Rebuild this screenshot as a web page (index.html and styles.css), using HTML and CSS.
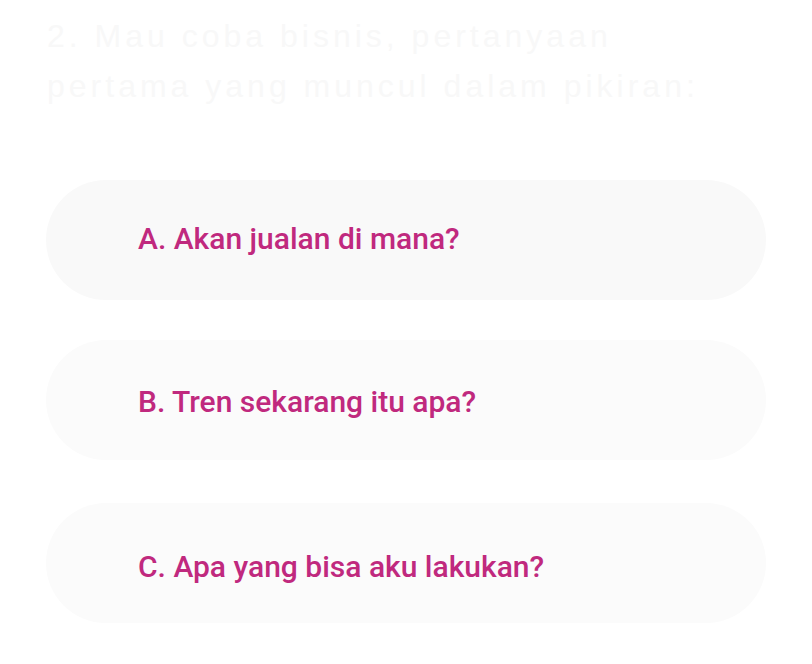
FILE: index.html
```html
<!DOCTYPE html>
<html lang="id">
<head>
<meta charset="utf-8">
<link rel="stylesheet" href="styles.css">
</head>
<body>
<main class="quiz">
  <h1 class="question">2. Mau coba bisnis, pertanyaan pertama yang muncul dalam pikiran:</h1>
  <ul class="options">
    <li class="option option-a">A. Akan jualan di mana?</li>
    <li class="option option-b">B. Tren sekarang itu apa?</li>
    <li class="option option-c">C. Apa yang bisa aku lakukan?</li>
  </ul>
</main>
</body>
</html>
```

FILE: styles.css
```css
html, body {
  margin: 0;
  padding: 0;
  background: #ffffff;
}
.quiz {
  padding: 11px 46px 0 46px;
  width: 720px;
}
.question {
  margin: 0 0 69px 1px;
  font-family: "Liberation Sans", Arial, sans-serif;
  font-weight: 400;
  font-size: 32px;
  line-height: 50px;
  letter-spacing: 4px;
  color: #f8f8f8;
  width: 680px;
}
.options {
  list-style: none;
  margin: 0;
  padding: 0;
  display: flex;
  flex-direction: column;
  gap: 40px;
}
.option {
  box-sizing: border-box;
  height: 120px;
  border-radius: 60px;
  background: #fbfbfb;
  display: flex;
  align-items: center;
  padding: 0 0 0 92px;
  font-family: Roboto, "Noto Sans", sans-serif;
  font-weight: 500;
  font-size: 30px;
  color: #c0297e;
}
.option-a {
  background: #f9f9f9;
  padding-bottom: 4px;
}
.option-b {
  padding-top: 3px;
}
.option-c {
  margin-top: 3px;
  padding-top: 7px;
}
```
